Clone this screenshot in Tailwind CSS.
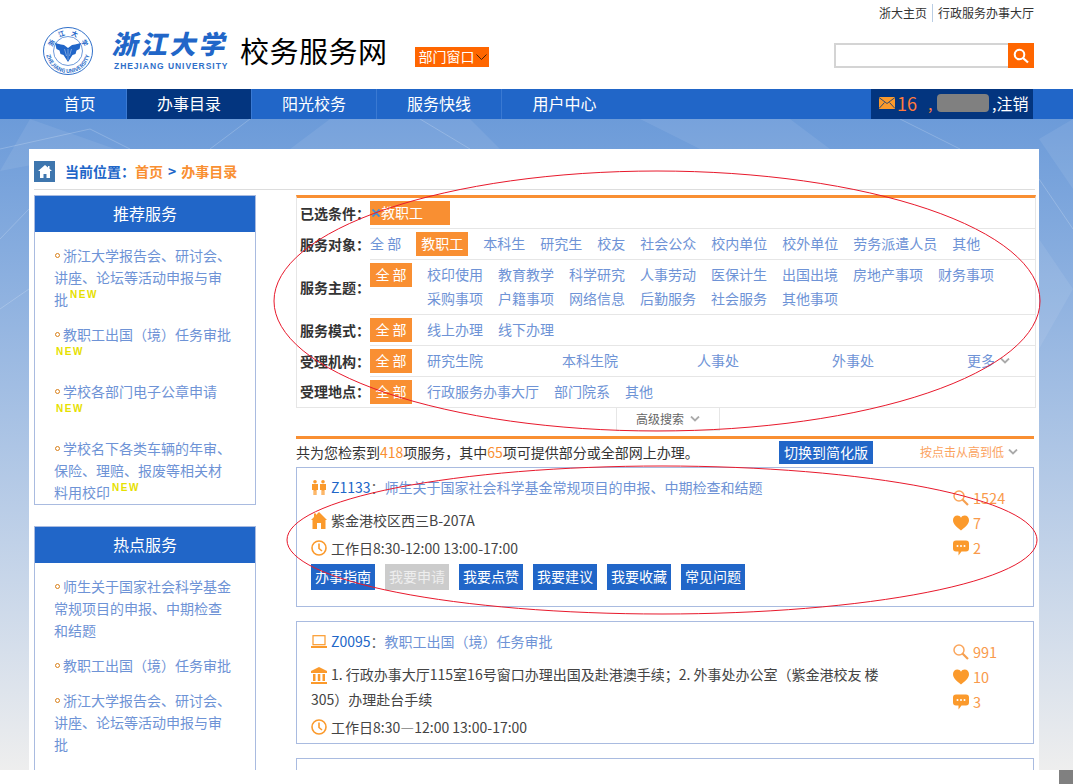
<!DOCTYPE html>
<html lang="zh-CN">

<head>
    <meta charset="UTF-8">
    <meta name="viewport" content="width=device-width, initial-scale=1.0">
    <title>校务服务网</title>
    <script src="https://cdn.jsdelivr.net/npm/@tailwindcss/browser@4"></script>
</head>

<body class="relative h-[784px] overflow-hidden bg-white font-['Noto_Sans_CJK_SC',sans-serif] text-[14px] text-[#444]">

    <!-- Cabecera -->
    <header class="relative h-[89px] bg-white">
        <div class="absolute right-[39px] top-[4px] flex h-[18px] items-center text-[12px] leading-[18px] text-[#333]">
            <a href="#" class="pr-[5px]">浙大主页</a>
            <a href="#" class="border-l border-[#b9cde4] pl-[5px]">行政服务办事大厅</a>
        </div>

        <div class="flex items-start pl-[43px] pt-[27px]">
            <!-- sello -->
            <svg class="h-[48px] w-[50px] shrink-0" viewBox="0 0 50 48" fill="none">
                <defs>
                    <path id="arcTop" d="M9 24a16 16 0 0 1 32 0" />
                    <path id="arcBottom" d="M3 24a22 22 0 0 0 44 0" />
                </defs>
                <ellipse cx="25" cy="24" rx="24.500" ry="23.500" stroke="#2f6fc9" stroke-width="1" />
                <circle cx="25" cy="24" r="14.500" stroke="#2f6fc9" stroke-width="0.7" />
                <text fill="#2166c8" font-size="6.500" font-weight="700"><textPath href="#arcTop" startOffset="8%" textLength="42">浙江大学</textPath></text>
                <text fill="#2f6fc9" font-size="5.500" font-weight="700"><textPath href="#arcBottom" startOffset="6%" textLength="60">ZHEJIANG UNIVERSITY</textPath></text>
                <path d="M12 16l6 1.500 3 0.500 4 3 4-3 3-0.500 6-1.500-1.500 6-3 1.500-1 3.500-3 1-4.500 7-4.500-7-3-1-1-3.500-3-1.500z" fill="#2166c8" />
                <path d="M25 22v11M21.500 22l2 7M28.500 22l-2 7" stroke="#fff" stroke-width="0.400" />
            </svg>

            <!-- nombre de la universidad -->
            <div class="ml-[21px] w-[114px] shrink-0">
                <div class="-skew-x-12 whitespace-nowrap text-[26px] font-black leading-[31px] tracking-[3px] text-[#2166c8]">浙江大学</div>
                <div class="mt-[3px] whitespace-nowrap font-['Liberation_Sans',sans-serif] text-[8.500px] font-bold leading-[10px] tracking-[0.95px] text-[#2f6fc9]">ZHEJIANG UNIVERSITY</div>
            </div>

            <div class="ml-[12px] mt-[4px] whitespace-nowrap text-[29px] leading-[38px] tracking-[0.5px] text-black">校务服务网</div>

            <a href="#" class="ml-[27px] mt-[20px] flex h-[20px] w-[74px] items-center bg-[#ff6600] pb-[1px] pl-[4px] text-[14px] leading-[19px] text-white">
                部门窗口
                <svg class="ml-[1px] h-[6px] w-[11px]" viewBox="0 0 11 6" fill="none"><path d="M0.500 0.500l5 5 5-5" stroke="#4a2408" stroke-width="1" /></svg>
            </a>
        </div>

        <div class="absolute left-[834px] top-[43px] flex h-[25px] w-[200px]">
            <input class="h-full w-[174px] border-2 border-r-0 border-[#d4d4d4] bg-white" type="text">
            <button class="flex h-full w-[26px] items-center justify-center bg-[#ff6600]">
                <svg class="h-[16px] w-[16px]" viewBox="0 0 16 16" fill="none"><circle cx="6.500" cy="6.500" r="4.800" stroke="#fff" stroke-width="2" /><path d="M10 10l5 4.500" stroke="#fff" stroke-width="2.200" /></svg>
            </button>
        </div>
    </header>

    <!-- Navbar -->
    <nav class="flex h-[30px] bg-[#2166c8] text-[16px] leading-[28px] text-white">
        <a href="#" class="ml-[33px] w-[94px] border-r border-[#3a79d2] text-center">首页</a>
        <a href="#" class="w-[125px] border-r border-[#3a79d2] bg-[#03357f] text-center">办事目录</a>
        <a href="#" class="w-[125px] border-r border-[#3a79d2] text-center">阳光校务</a>
        <a href="#" class="w-[125px] border-r border-[#3a79d2] text-center">服务快线</a>
        <a href="#" class="w-[125px] text-center">用户中心</a>
        <div class="ml-[244px] flex w-[162px] items-center bg-[#03357f] pb-[2px] pl-[8px]">
            <svg class="h-[12px] w-[16px] shrink-0" viewBox="0 0 16 12"><rect width="16" height="12" fill="#fb9a2c" /><path d="M0 0.500l8 6 8-6M0 11.500l5.500-6M16 11.500l-5.500-6" fill="none" stroke="#03357f" stroke-width="0.800" /></svg>
            <span class="ml-[2px] w-[31px] text-[18px] text-[#ff7a3c]">16</span>
            <span class="w-[9px] text-[#ff7a3c]">,</span>
            <span class="h-[18px] w-[52px] rounded-[4px] bg-[#808080]"></span>
            <span class="ml-[3px]">,注销</span>
        </div>
    </nav>

    <!-- Fondo degradado -->
    <div class="relative h-[651px] overflow-hidden bg-linear-to-b from-[#6c9bd9] to-[#eeeeee]">
        <svg class="absolute left-0 top-0 h-[300px] w-[1073px]" viewBox="0 0 1073 300" fill="none">
            <path d="M30 0L115 30 0 52zM330 0L290 30 500 30 470 0zM640 0L700 30 830 30 790 0zM1039 20L1073 0V70zM1039 120L1073 170 1039 230z" fill="#fff" fill-opacity="0.08" />
            <path d="M0 30L90 10 130 30M250 0L210 30M420 0L470 30M900 0L960 30M1039 60L1073 110M0 120L29 90M0 190L29 170" stroke="#fff" stroke-opacity="0.2" />
        </svg>

        <!-- Contenido principal -->
        <main class="relative ml-[29px] mt-[30px] w-[1010px] bg-white pl-[5px] pt-[12px]">

            <!-- Breadcrumb -->
            <div class="flex h-[29px] w-[1001px] border-b border-[#dddddd] text-[14px] font-bold leading-[21px]">
                <div class="flex h-[21px] w-[21px] items-center justify-center bg-[#3e76ae]">
                    <svg class="h-[13px] w-[14px]" viewBox="0 0 14 13" fill="#fff"><path d="M7 0L0 6h2v7h3.500V9h3v4H12V6h2l-2.500-2.200V1H10v1.500z" /></svg>
                </div>
                <span class="ml-[10px] text-[#2166c8]">当前位置<span class="font-['Noto_Sans_CJK_TC',sans-serif]">：</span></span>
                <a href="#" class="text-[#f98f32]">首页</a>
                <span class="mx-[5px] text-[#2166c8]">&gt;</span>
                <a href="#" class="text-[#f98f32]">办事目录</a>
            </div>

            <div class="mt-[5px] flex items-start">

                <!-- Columna izquierda -->
                <aside class="w-[222px] shrink-0">
                    <section class="border border-[#a9bbe0]">
                        <h2 class="h-[36px] bg-[#2166c8] text-center text-[16px] leading-[35px] text-white">推荐服务</h2>
                        <ul class="pb-[1px] pl-[19px] pr-[21px] pt-[12px] leading-[22px] text-[#6e93d6]">
                            <li class="mb-[13px]">
                                <span class="mr-[4px] inline-block h-[5px] w-[5px] -translate-y-[3px] translate-x-[1px] rounded-full border border-[#d9801a]"></span><a href="#">浙江大学报告会、研讨会、讲座、论坛等活动申报与审批</a><span class="ml-[2px] inline-block align-[7px] font-['Liberation_Sans',sans-serif] text-[10px] font-bold leading-[8px] tracking-[1.5px] text-[#e6e000]">NEW</span>
                            </li>
                            <li class="mb-[13px]">
                                <span class="mr-[4px] inline-block h-[5px] w-[5px] -translate-y-[3px] translate-x-[1px] rounded-full border border-[#d9801a]"></span><a href="#">教职工出国（境）任务审批</a><span class="ml-[2px] inline-block align-[7px] font-['Liberation_Sans',sans-serif] text-[10px] font-bold leading-[8px] tracking-[1.5px] text-[#e6e000]">NEW</span>
                            </li>
                            <li class="mb-[13px]">
                                <span class="mr-[4px] inline-block h-[5px] w-[5px] -translate-y-[3px] translate-x-[1px] rounded-full border border-[#d9801a]"></span><a href="#">学校各部门电子公章申请</a><span class="ml-[2px] inline-block align-[7px] font-['Liberation_Sans',sans-serif] text-[10px] font-bold leading-[8px] tracking-[1.5px] text-[#e6e000]">NEW</span>
                            </li>
                            <li>
                                <span class="mr-[4px] inline-block h-[5px] w-[5px] -translate-y-[3px] translate-x-[1px] rounded-full border border-[#d9801a]"></span><a href="#">学校名下各类车辆的年审、保险、理赔、报废等相关材料用校印</a><span class="ml-[2px] inline-block align-[7px] font-['Liberation_Sans',sans-serif] text-[10px] font-bold leading-[8px] tracking-[1.5px] text-[#e6e000]">NEW</span>
                            </li>
                        </ul>
                    </section>

                    <section class="mt-[21px] border border-[#a9bbe0]">
                        <h2 class="h-[36px] bg-[#2166c8] text-center text-[16px] leading-[35px] text-white">热点服务</h2>
                        <ul class="pb-[40px] pl-[19px] pr-[21px] pt-[12px] leading-[22px] text-[#6e93d6]">
                            <li class="mb-[13px]">
                                <span class="mr-[4px] inline-block h-[5px] w-[5px] -translate-y-[3px] translate-x-[1px] rounded-full border border-[#d9801a]"></span><a href="#">师生关于国家社会科学基金常规项目的申报、中期检查和结题</a>
                            </li>
                            <li class="mb-[13px]">
                                <span class="mr-[4px] inline-block h-[5px] w-[5px] -translate-y-[3px] translate-x-[1px] rounded-full border border-[#d9801a]"></span><a href="#">教职工出国（境）任务审批</a>
                            </li>
                            <li>
                                <span class="mr-[4px] inline-block h-[5px] w-[5px] -translate-y-[3px] translate-x-[1px] rounded-full border border-[#d9801a]"></span><a href="#">浙江大学报告会、研讨会、讲座、论坛等活动申报与审批</a>
                            </li>
                        </ul>
                    </section>
                </aside>

                <!-- Columna derecha -->
                <div class="ml-[40px] w-[740px] shrink-0">

                    <!-- Filtros -->
                    <div class="border-x border-b border-x-[#e6e6e6] border-b-[#e6e6e6] border-t-[3px] border-t-[#f98f32] leading-[22px] text-[#6e93d6]">
                        <div class="flex">
                            <div class="w-[73px] shrink-0 self-center pb-[2px] pl-[3px] font-bold text-[#333]">已选条件<span class="font-['Noto_Sans_CJK_TC',sans-serif]">：</span></div>
                            <div class="flex h-[31px] flex-1 border-b border-[#e6e6e6] py-[3px]">
                                <span class="flex h-[24px] w-[80px] items-start bg-[#f98f32] pl-[2px] text-white">
                                    <svg class="mr-[1px] mt-[8px] h-[8px] w-[8px] shrink-0" viewBox="0 0 8 8" fill="none"><path d="M0.500 0.500l7 7M7.500 0.500l-7 7" stroke="#3a8fd8" stroke-width="1.800" /></svg>
                                    教职工
                                </span>
                            </div>
                        </div>
                        <div class="flex">
                            <div class="w-[73px] shrink-0 self-center pb-[2px] pl-[3px] font-bold text-[#333]">服务对象<span class="font-['Noto_Sans_CJK_TC',sans-serif]">：</span></div>
                            <div class="flex h-[31px] flex-1 gap-x-[15px] border-b border-[#e6e6e6] py-[3px]">
                                <a href="#">全 部</a>
                                <a href="#" class="bg-[#f98f32] px-[5px] text-white">教职工</a>
                                <a href="#">本科生</a>
                                <a href="#">研究生</a>
                                <a href="#">校友</a>
                                <a href="#">社会公众</a>
                                <a href="#">校内单位</a>
                                <a href="#">校外单位</a>
                                <a href="#">劳务派遣人员</a>
                                <a href="#">其他</a>
                            </div>
                        </div>
                        <div class="flex">
                            <div class="w-[73px] shrink-0 self-center pb-[2px] pl-[3px] font-bold text-[#333]">服务主题<span class="font-['Noto_Sans_CJK_TC',sans-serif]">：</span></div>
                            <div class="flex flex-1 items-start border-b border-[#e6e6e6] py-[3px]">
                                <a href="#" class="h-[24px] w-[42px] bg-[#f98f32] text-center text-white">全 部</a>
                                <div class="ml-[15px] flex h-[48px] w-[572px] flex-wrap content-start gap-x-[15px] gap-y-[2px]">
                                    <a href="#">校印使用</a>
                                    <a href="#">教育教学</a>
                                    <a href="#">科学研究</a>
                                    <a href="#">人事劳动</a>
                                    <a href="#">医保计生</a>
                                    <a href="#">出国出境</a>
                                    <a href="#">房地产事项</a>
                                    <a href="#">财务事项</a>
                                    <a href="#">采购事项</a>
                                    <a href="#">户籍事项</a>
                                    <a href="#">网络信息</a>
                                    <a href="#">后勤服务</a>
                                    <a href="#">社会服务</a>
                                    <a href="#">其他事项</a>
                                </div>
                            </div>
                        </div>
                        <div class="flex">
                            <div class="w-[73px] shrink-0 self-center pb-[2px] pl-[3px] font-bold text-[#333]">服务模式<span class="font-['Noto_Sans_CJK_TC',sans-serif]">：</span></div>
                            <div class="flex h-[31px] flex-1 gap-x-[15px] border-b border-[#e6e6e6] py-[3px]">
                                <a href="#" class="w-[42px] bg-[#f98f32] text-center text-white">全 部</a>
                                <a href="#">线上办理</a>
                                <a href="#">线下办理</a>
                            </div>
                        </div>
                        <div class="flex">
                            <div class="w-[73px] shrink-0 self-center pb-[2px] pl-[3px] font-bold text-[#333]">受理机构<span class="font-['Noto_Sans_CJK_TC',sans-serif]">：</span></div>
                            <div class="flex h-[31px] flex-1 border-b border-[#e6e6e6] py-[3px]">
                                <a href="#" class="w-[42px] bg-[#f98f32] text-center text-white">全 部</a>
                                <a href="#" class="ml-[15px] w-[135px]">研究生院</a>
                                <a href="#" class="w-[135px]">本科生院</a>
                                <a href="#" class="w-[135px]">人事处</a>
                                <a href="#" class="w-[135px]">外事处</a>
                                <a href="#" class="flex items-start">更多
                                    <svg class="ml-[5px] mt-[9px] h-[6px] w-[10px]" viewBox="0 0 10 6" fill="none"><path d="M1 0.500l4 4 4-4" stroke="#aaaaaa" stroke-width="1.800" /></svg>
                                </a>
                            </div>
                        </div>
                        <div class="flex">
                            <div class="w-[73px] shrink-0 self-center pb-[2px] pl-[3px] font-bold text-[#333]">受理地点<span class="font-['Noto_Sans_CJK_TC',sans-serif]">：</span></div>
                            <div class="flex h-[30px] flex-1 gap-x-[15px] py-[3px]">
                                <a href="#" class="w-[42px] bg-[#f98f32] text-center text-white">全 部</a>
                                <a href="#">行政服务办事大厅</a>
                                <a href="#">部门院系</a>
                                <a href="#">其他</a>
                            </div>
                        </div>
                    </div>

                    <!-- Búsqueda avanzada -->
                    <div class="ml-[320px] flex h-[23px] w-[104px] items-center justify-center gap-x-[6px] border-x border-b border-[#e6e6e6] text-[12px] text-[#666]">
                        高级搜索
                        <svg class="h-[6px] w-[10px]" viewBox="0 0 10 6" fill="none"><path d="M1 0.500l4 4 4-4" stroke="#aaaaaa" stroke-width="1.800" /></svg>
                    </div>

                    <!-- Resultados -->
                    <div class="mt-[5px] flex h-[31px] w-[738px] items-start border-t-[3px] border-[#f98f32]">
                        <p class="mt-[1px] w-[483px] whitespace-nowrap text-[14px] leading-[24px] text-[#333]">共为您检索到<span class="text-[#f98f32]">418</span>项服务，其中<span class="text-[#f98f32]">65</span>项可提供部分或全部网上办理。</p>
                        <a href="#" class="mt-[2px] h-[23px] w-[94px] bg-[#2166c8] text-center leading-[22px] text-white">切换到简化版</a>
                        <a href="#" class="ml-[47px] mt-[1px] flex h-[23px] items-center text-[12px] text-[#fba35f]">按点击从高到低
                            <svg class="ml-[4px] h-[6px] w-[10px]" viewBox="0 0 10 6" fill="none"><path d="M1 0.500l4 4 4-4" stroke="#aaaaaa" stroke-width="1.800" /></svg>
                        </a>
                    </div>

                    <!-- Tarjeta Z1133 -->
                    <article class="flex h-[140px] w-[738px] border border-[#a9bbe0] pl-[14px] pt-[7px]">
                        <div class="w-[642px] shrink-0">
                            <div class="flex h-[24px] items-center leading-[24px]">
                                <svg class="mr-[4px] h-[15px] w-[16px] shrink-0" viewBox="0 0 16 15" fill="#fb9a2c"><circle cx="4" cy="1.800" r="1.800" /><circle cx="12" cy="1.800" r="1.800" /><path d="M1 4h6v6H5.500v5H4.300v-4.500h-.6V15H2.500v-5H1zM9 4h6v6h-1.500v5h-1.200v-4.500h-.6V15h-1.200v-5H9z" /></svg>
                                <a href="#" class="text-[#2166c8]">Z1133<span class="font-['Noto_Sans_CJK_TC',sans-serif] text-[#666]">：</span><span class="text-[#6e93d6]">师生关于国家社会科学基金常规项目的申报、中期检查和结题</span></a>
                            </div>
                            <div class="mt-[9px] flex h-[24px] items-center">
                                <svg class="mr-[4px] h-[17px] w-[16px] shrink-0" viewBox="0 0 16 17" fill="#fb9a2c"><path d="M8 0l8 8h-1.500v9H10v-6H6v6H1.500V8H0l3-3V1.500h2V3z" /></svg>
                                紫金港校区西三B-207A
                            </div>
                            <div class="mt-[4px] flex h-[24px] items-center">
                                <svg class="mr-[4px] h-[16px] w-[16px] shrink-0" viewBox="0 0 16 16" fill="none"><circle cx="8" cy="8" r="7" stroke="#fb9a2c" stroke-width="1.600" /><path d="M8 3.500V8.500L11 11" stroke="#fb9a2c" stroke-width="1.600" /></svg>
                                工作日8:30-12:00 13:00-17:00
                            </div>
                            <div class="mt-[4px] flex gap-x-[10px] text-center leading-[24px] text-white">
                                <a href="#" class="h-[26px] w-[64px] bg-[#2166c8]">办事指南</a>
                                <a href="#" class="h-[26px] w-[64px] bg-[#cccccc] text-[#eeeeee]">我要申请</a>
                                <a href="#" class="h-[26px] w-[64px] bg-[#2166c8]">我要点赞</a>
                                <a href="#" class="h-[26px] w-[64px] bg-[#2166c8]">我要建议</a>
                                <a href="#" class="h-[26px] w-[64px] bg-[#2166c8]">我要收藏</a>
                                <a href="#" class="h-[26px] w-[64px] bg-[#2166c8]">常见问题</a>
                            </div>
                        </div>
                        <div class="pt-[10px] text-[14.500px] leading-[25px] text-[#f99a4b]">
                            <div class="flex h-[25px] items-center gap-x-[4px]">
                                <svg class="h-[16px] w-[16px]" viewBox="0 0 16 16" fill="none"><circle cx="6" cy="6" r="5" stroke="#fba65c" stroke-width="1.500" /><path d="M9.500 9.500l5.500 5.500" stroke="#f6a050" stroke-width="2.200" /></svg>1524
                            </div>
                            <div class="flex h-[25px] items-center gap-x-[4px]">
                                <svg class="h-[16px] w-[16px]" viewBox="0 0 16 15" fill="#fb9a2c"><path d="M8 15C3 11 0 8.500 0 4.500 0 2 2 0 4.300 0 6 0 7.300.900 8 2.200 8.700.900 10 0 11.700 0 14 0 16 2 16 4.500 16 8.500 13 11 8 15z" /></svg>7
                            </div>
                            <div class="flex h-[25px] items-center gap-x-[4px]">
                                <svg class="h-[16px] w-[16px]" viewBox="0 0 16 15" fill="#fb9a2c"><path d="M3 0h10a3 3 0 0 1 3 3v5a3 3 0 0 1-3 3H8.500L5.500 15V11H3a3 3 0 0 1-3-3V3a3 3 0 0 1 3-3z" /><circle cx="4.500" cy="5.500" r="1" fill="#fff" /><circle cx="8" cy="5.500" r="1" fill="#fff" /><circle cx="11.500" cy="5.500" r="1" fill="#fff" /></svg>2
                            </div>
                        </div>
                    </article>

                    <!-- Tarjeta Z0095 -->
                    <article class="mt-[14px] flex h-[123px] w-[738px] border border-[#a9bbe0] pl-[14px] pt-[7px]">
                        <div class="w-[590px] shrink-0 pr-[10px]">
                            <div class="flex h-[24px] items-center leading-[24px]">
                                <svg class="mr-[4px] h-[13px] w-[16px] shrink-0" viewBox="0 0 16 13" fill="none"><rect x="2" y="0.700" width="12" height="9" stroke="#fb9a2c" stroke-width="1.200" /><path d="M0 11h16v2H0z" fill="#fb9a2c" /></svg>
                                <a href="#" class="text-[#2166c8]">Z0095<span class="font-['Noto_Sans_CJK_TC',sans-serif] text-[#666]">：</span><span class="text-[#6e93d6]">教职工出国（境）任务审批</span></a>
                            </div>
                            <p class="mt-[9px] leading-[25px]">
                                <svg class="mr-[4px] inline-block h-[17px] w-[16px] -translate-y-[1px] align-middle" viewBox="0 0 16 17" fill="#fb9a2c"><path d="M8 0l8 4v2H0V4zM2 7h2.500v7H2zM6.800 7h2.500v7H6.800zM11.500 7H14v7h-2.500zM0 15h16v2H0z" /></svg>1. 行政办事大厅115室16号窗口办理出国及赴港澳手续；2. 外事处办公室（紫金港校友 楼 305）办理赴台手续
                            </p>
                            <div class="mt-[3px] flex h-[24px] items-center">
                                <svg class="mr-[4px] h-[16px] w-[16px] shrink-0" viewBox="0 0 16 16" fill="none"><circle cx="8" cy="8" r="7" stroke="#fb9a2c" stroke-width="1.600" /><path d="M8 3.500V8.500L11 11" stroke="#fb9a2c" stroke-width="1.600" /></svg>
                                工作日8:30—12:00 13:00-17:00
                            </div>
                        </div>
                        <div class="ml-[52px] pt-[10px] text-[14.500px] leading-[25px] text-[#f99a4b]">
                            <div class="flex h-[25px] items-center gap-x-[4px]">
                                <svg class="h-[16px] w-[16px]" viewBox="0 0 16 16" fill="none"><circle cx="6" cy="6" r="5" stroke="#fba65c" stroke-width="1.500" /><path d="M9.500 9.500l5.500 5.500" stroke="#f6a050" stroke-width="2.200" /></svg>991
                            </div>
                            <div class="flex h-[25px] items-center gap-x-[4px]">
                                <svg class="h-[16px] w-[16px]" viewBox="0 0 16 15" fill="#fb9a2c"><path d="M8 15C3 11 0 8.500 0 4.500 0 2 2 0 4.300 0 6 0 7.300.900 8 2.200 8.700.900 10 0 11.700 0 14 0 16 2 16 4.500 16 8.500 13 11 8 15z" /></svg>10
                            </div>
                            <div class="flex h-[25px] items-center gap-x-[4px]">
                                <svg class="h-[16px] w-[16px]" viewBox="0 0 16 15" fill="#fb9a2c"><path d="M3 0h10a3 3 0 0 1 3 3v5a3 3 0 0 1-3 3H8.500L5.500 15V11H3a3 3 0 0 1-3-3V3a3 3 0 0 1 3-3z" /><circle cx="4.500" cy="5.500" r="1" fill="#fff" /><circle cx="8" cy="5.500" r="1" fill="#fff" /><circle cx="11.500" cy="5.500" r="1" fill="#fff" /></svg>3
                            </div>
                        </div>
                    </article>

                    <!-- Tarjeta siguiente, cortada por el borde de la captura -->
                    <article class="mt-[14px] h-[120px] w-[738px] border border-[#a9bbe0]"></article>
                </div>
            </div>
        </main>
    </div>

    <!-- Elipses rojas dibujadas sobre la captura -->
    <svg class="pointer-events-none absolute left-0 top-0 h-[784px] w-[1073px]" viewBox="0 0 1073 784" fill="none">
        <ellipse cx="657" cy="301" rx="383" ry="130" stroke="#e8192c" stroke-width="1" />
        <ellipse cx="662" cy="540" rx="375" ry="74" stroke="#e8192c" stroke-width="1" />
    </svg>

    <!-- Esquina de las barras de desplazamiento -->
    <div class="absolute bottom-0 right-0 h-[14px] w-[14px] bg-[#808080]"></div>
</body>

</html>
